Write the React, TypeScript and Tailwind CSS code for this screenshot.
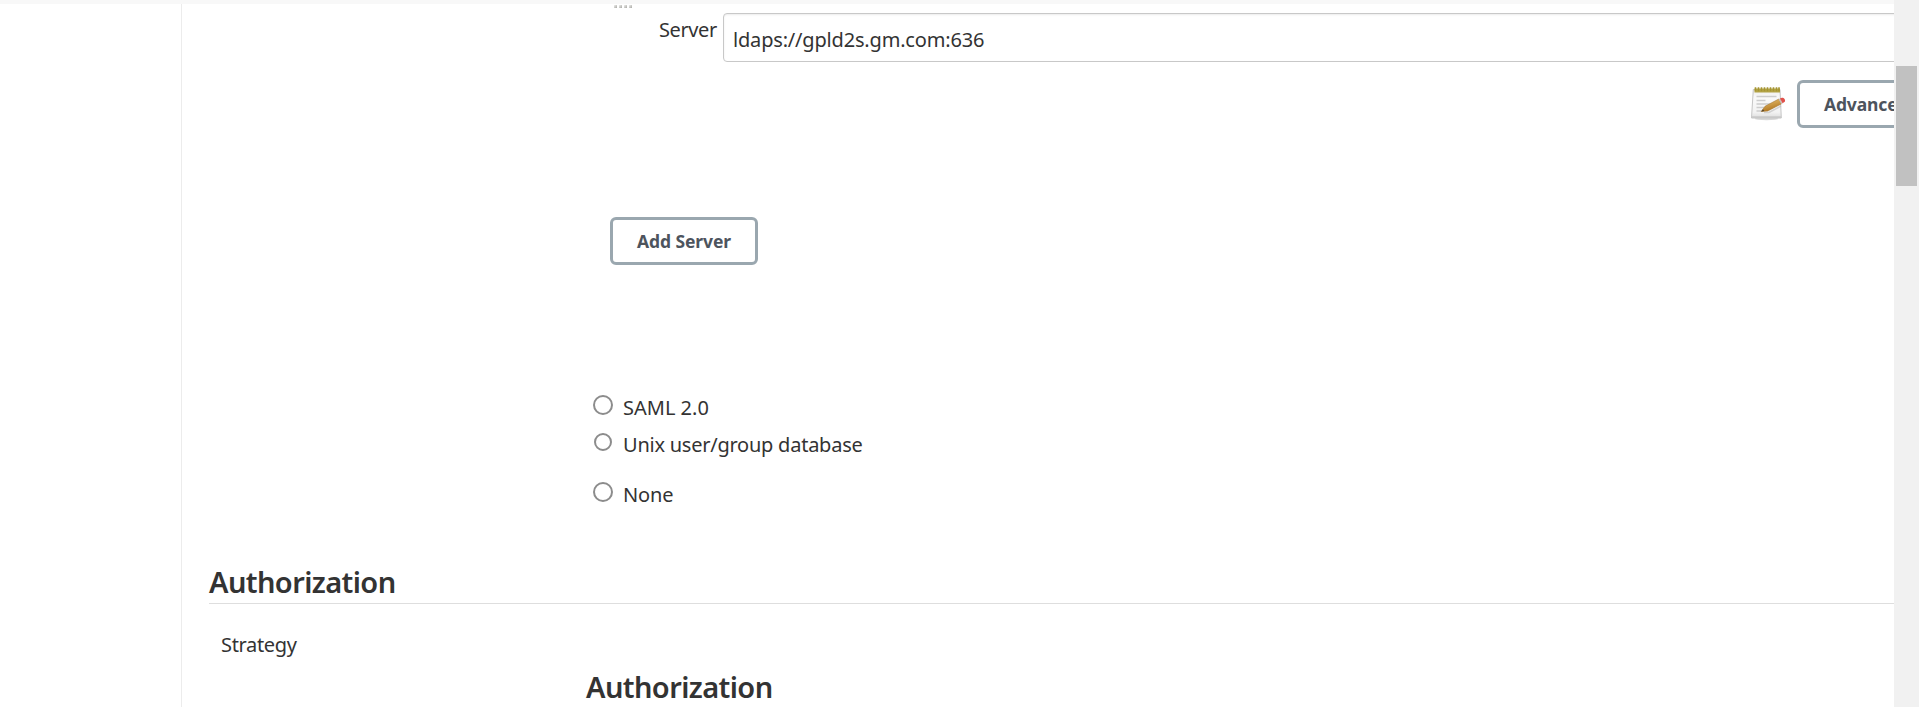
import React from "react";

const label = "text-[20px] leading-[30px] whitespace-nowrap text-[#333]";

function NotepadIcon() {
  return (
    <svg width="38" height="36" viewBox="0 0 38 36" className="shrink-0" aria-hidden="true">
      <defs>
        <linearGradient id="paper" x1="0" y1="0" x2="0" y2="1">
          <stop offset="0" stopColor="#eeeeee" />
          <stop offset="0.3" stopColor="#fafafa" />
          <stop offset="0.8" stopColor="#f2f2f2" />
          <stop offset="1" stopColor="#dcdcdc" />
        </linearGradient>
        <linearGradient id="pencil" x1="0" y1="0" x2="0.4" y2="1">
          <stop offset="0" stopColor="#edc878" />
          <stop offset="1" stopColor="#b0741c" />
        </linearGradient>
      </defs>
      <ellipse cx="17.500" cy="32.800" rx="12" ry="1.400" fill="#d8d8d8" />
      <path d="M4.300 3.500h26.700l1.300 28.500h-29.800z" fill="url(#paper)" stroke="#c6c6c6" strokeLinejoin="round" />
      <path d="M3 30.300h29v1.700h-29z" fill="#c8c8c8" />
      <path d="M5.500 2.500h25.500v4h-25.500z" fill="#b5a548" />
      <path d="M6.500 1.300v4M9.500 1.300v4M12.500 1.300v4M15.500 1.300v4M18.500 1.300v4M21.500 1.300v4M24.500 1.300v4M27.500 1.300v4M30 1.300v4" stroke="#a59533" strokeWidth="1.600" />
      <path d="M7.500 10.500h20M7.500 14.500h9M7.500 18h14M7.500 21.500h8M7.500 25h6" stroke="#cdcdcd" strokeWidth="1.300" />
      <path d="M15 26.500h5l12-6.500" stroke="#bdbdbd" strokeWidth="1.500" fill="none" opacity="0.600" />
      <path d="M12.300 25.500l3.700-5.200 13.800-7.300 2.700 4.800-13.800 7.200z" fill="url(#pencil)" stroke="#a57732" strokeWidth="0.600" />
      <path d="M12.300 25.500l1.600-2.300 1.500 1.900z" fill="#54452d" />
      <path d="M29.500 13.200l1.500-.8 2.700 4.800-1.500.8z" fill="#c9c0bb" />
      <path d="M31 12.400c3-2 6 1 4.800 3.300l-2.200 1.500z" fill="#e0504a" />
    </svg>
  );
}

function Radio({ text, size, track }: { text: string; size: string; track: string }) {
  return (
    <label className="flex h-[28px] items-start">
      <span className="flex w-[30px] shrink-0 justify-start">
        <span className="flex w-5 justify-center">
          <input type="radio" name="realm" className={`appearance-none rounded-full border-2 border-[#8c8c8c] bg-white ${size}`} />
        </span>
      </span>
      <span className={`${label} ${track}`}>{text}</span>
    </label>
  );
}

export default function App() {
  return (
    <div className="flex h-[707px] w-[1919px] overflow-hidden bg-white font-['Noto_Sans','Open_Sans',sans-serif]">
      <div className="flex w-[1894px] shrink-0 flex-col overflow-hidden">
        <div className="h-1 shrink-0 bg-[#f8f8f8]" />
        <div className="flex min-h-0 flex-1">
          <aside className="w-[182px] shrink-0 border-r border-[#ececec]" />
          <main className="flex min-w-0 flex-1 flex-col overflow-hidden pl-[27px]">
            <div className="flex h-[58px] shrink-0">
              <div className="ml-[405px] flex w-[45px] shrink-0 gap-[2px] pt-px">
                <i className="h-[3px] w-[3px] bg-linear-to-br from-[#f0f0ee] to-[#a9a9a5]" />
                <i className="h-[3px] w-[3px] bg-linear-to-br from-[#f0f0ee] to-[#a9a9a5]" />
                <i className="h-[3px] w-[3px] bg-linear-to-br from-[#f0f0ee] to-[#a9a9a5]" />
                <i className="h-[3px] w-[3px] bg-linear-to-br from-[#f0f0ee] to-[#a9a9a5]" />
              </div>
              <div className="w-[64px] shrink-0 pt-[11px]">
                <span className={`${label} block tracking-[-0.4px]`}>Server</span>
              </div>
              <div className="mt-[9px] h-[49px] w-[1300px] shrink-0 rounded-[4px] border border-[#c8c8c8] pl-[9px] pt-[11px] shadow-[inset_0_1px_2px_rgba(0,0,0,0.08)]">
                <span className={`${label} block tracking-[-0.18px]`}>ldaps://gpld2s.gm.com:636</span>
              </div>
            </div>

            <div className="ml-[1540px] flex h-[66px] shrink-0 items-end">
              <div className="mb-[6px] w-[48px] shrink-0"><NotepadIcon /></div>
              <button className="h-12 w-[170px] shrink-0 rounded-[6px] border-[3px] border-[#9aa7af] pl-6 text-left text-[17.5px] font-bold leading-[26px] tracking-[-0.15px] text-[#4d545d]">
                Advanced...
              </button>
            </div>

            <div className="mt-[89px] flex shrink-0 pl-[401px]">
              <button className="h-12 w-[148px] whitespace-nowrap rounded-[6px] border-[3px] border-[#9aa7af] text-[17.5px] font-bold leading-[26px] tracking-[-0.1px] text-[#4d545d]">
                Add Server
              </button>
            </div>

            <div className="mt-[128px] flex shrink-0 flex-col pl-[384px]">
              <Radio text="SAML 2.0" size="mt-[2px] h-5 w-5" track="tracking-normal" />
              <div className="h-[9px]" />
              <Radio text="Unix user/group database" size="mt-[3px] h-[18px] w-[18px]" track="tracking-[-0.24px]" />
              <div className="h-[22px]" />
              <Radio text="None" size="mt-[2px] h-5 w-5" track="tracking-[-0.1px]" />
            </div>

            <h2 className="mt-[54px] h-[42px] shrink-0 border-b border-[#dedede] text-[29px] font-semibold leading-[40px] tracking-[-0.6px] text-[#333]">
              Authorization
            </h2>
            <div className="mt-[26px] h-[28px] shrink-0 pl-[12px]">
              <span className={`${label} block tracking-[-0.35px]`}>Strategy</span>
            </div>
            <h2 className="mt-[9px] h-[40px] shrink-0 pl-[377px] text-[29px] font-semibold leading-[40px] tracking-[-0.6px] text-[#333]">
              Authorization
            </h2>
          </main>
        </div>
      </div>
      <div className="w-[25px] shrink-0 bg-[#f1f1f1] px-[2px] pt-[66px]">
        <div className="h-[120px] w-[21px] bg-[#c1c1c1]" />
      </div>
    </div>
  );
}
